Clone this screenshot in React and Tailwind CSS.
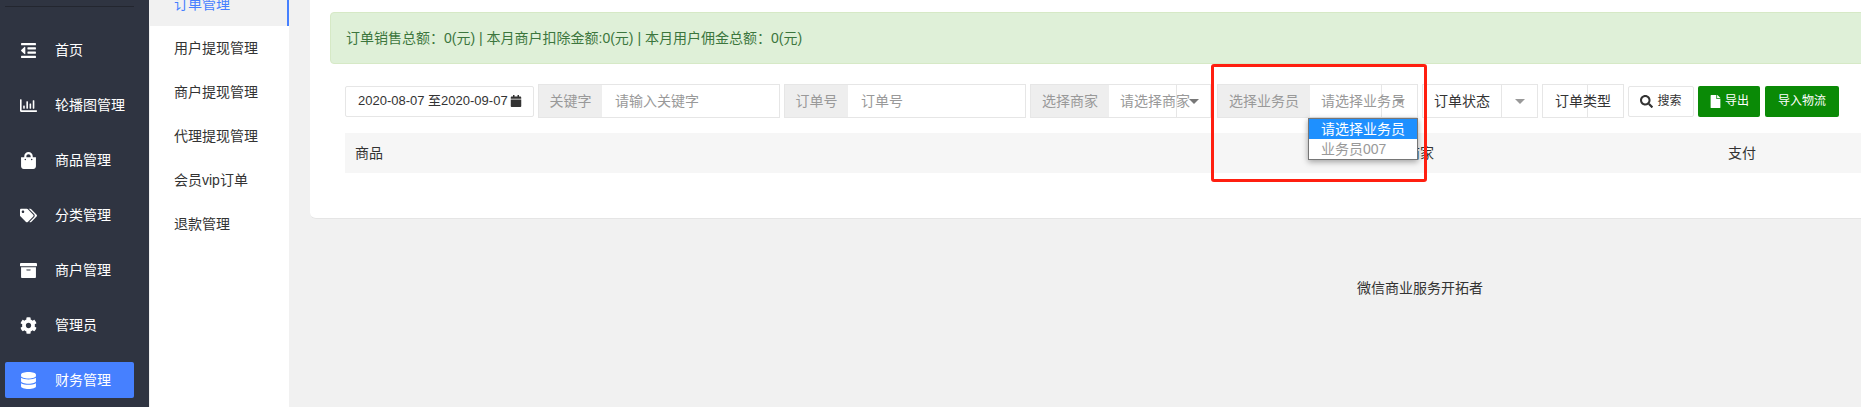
import {FaOutdent, FaRegChartBar, FaShoppingBag, FaTags, FaArchive, FaCog, FaDatabase, FaCalendar, FaSearch, FaFile} from "react-icons/fa";

const fontStack = "font-['Liberation_Sans','Noto_Sans_CJK_SC',sans-serif]";

const menu = [
  {name: '首页', icon: FaOutdent},
  {name: '轮播图管理', icon: FaRegChartBar},
  {name: '商品管理', icon: FaShoppingBag},
  {name: '分类管理', icon: FaTags},
  {name: '商户管理', icon: FaArchive},
  {name: '管理员', icon: FaCog},
  {name: '财务管理', icon: FaDatabase, active: true},
];

const subMenu = ['用户提现管理', '商户提现管理', '代理提现管理', '会员vip订单', '退款管理'];

function Sidebar() {
  return (
    <aside className="w-[149px] shrink-0 bg-[#2f3441] pl-[5px] pr-[15px] pt-[6px]">
      <div className="h-px bg-[#23262f]" />
      <ul className="mt-[25px] flex flex-col gap-[19px]">
        {menu.map(item => (
          <li
            key={item.name}
            className={`flex h-[36px] items-center rounded-[2px] pl-[15px] text-[14px] text-white ${item.active ? 'bg-[#4680ff]' : ''}`}
          >
            <span className="flex w-[35px] shrink-0 items-center">
              <item.icon className="text-[17px]" />
            </span>
            {item.name}
          </li>
        ))}
      </ul>
    </aside>
  );
}

function SubNav() {
  return (
    <nav className="ml-px w-[139px] shrink-0 bg-white text-[14px] text-[#333]">
      <div className="-mt-[18px] flex h-[44px] items-center border-r-2 border-[#4680ff] bg-[#f1f1f1] pl-[24px] text-[#4680ff]">
        订单管理
      </div>
      {subMenu.map(name => (
        <div key={name} className="flex h-[44px] items-center pl-[24px]">{name}</div>
      ))}
    </nav>
  );
}

function InputGroup({label, placeholder, width, labelWidth}) {
  return (
    <div className={`flex h-[34px] shrink-0 border border-[#e6e6e6] text-[14px] ${width}`}>
      <div className={`flex shrink-0 items-center justify-center bg-[#eeeeee] text-[#999] ${labelWidth}`}>{label}</div>
      <div className="flex items-center pl-[13px] text-[#999]">{placeholder}</div>
    </div>
  );
}

function Caret({className}) {
  return <span className={`block h-0 w-0 border-x-[5px] border-t-[5px] border-x-transparent ${className}`} />;
}

function SelectGroup({label, placeholder, width, labelWidth, selectWidth}) {
  return (
    <div className={`flex h-[34px] shrink-0 border border-[#e6e6e6] text-[14px] ${width}`}>
      <div className={`flex shrink-0 items-center justify-center bg-[#eeeeee] text-[#999] ${labelWidth}`}>{label}</div>
      <div className={`flex shrink-0 items-center whitespace-nowrap border-r border-[#e6e6e6] pl-[11px] text-[#999] ${selectWidth}`}>{placeholder}</div>
    </div>
  );
}

function Toolbar() {
  return (
    <div className="ml-[35px] mt-[20px] flex items-center gap-[4px] whitespace-nowrap">
      <div className="flex h-[31px] w-[189px] shrink-0 items-center gap-[2px] rounded-[2px] border border-[#e6e6e6] pl-[12px] text-[13px] text-[#333]">
        2020-08-07 至2020-09-07
        <FaCalendar className="text-[12px]" />
      </div>
      <InputGroup label="关键字" placeholder="请输入关键字" width="w-[242px]" labelWidth="w-[63px]" />
      <InputGroup label="订单号" placeholder="订单号" width="w-[242px]" labelWidth="w-[63px]" />
      <div className="relative">
        <SelectGroup label="选择商家" placeholder="请选择商家" width="w-[181px]" labelWidth="w-[78px]" selectWidth="w-[68px]" />
        <Caret className="absolute left-[159px] top-[15px] border-t-[#777]" />
      </div>
      <div className="relative ml-[2px]">
        <SelectGroup label="选择业务员" placeholder="请选择业务员" width="w-[201px]" labelWidth="w-[92px]" selectWidth="w-[72px]" />
        <Caret className="absolute left-[178px] top-[15px] border-t-[#999]" />
      </div>
      <div className="flex h-[34px] w-[116px] shrink-0 border border-[#e6e6e6] text-[14px] text-[#333]">
        <div className="flex w-[79px] shrink-0 items-center justify-center border-r border-[#e6e6e6]">订单状态</div>
        <div className="flex flex-1 items-center justify-center"><Caret className="border-t-[#999]" /></div>
      </div>
      <div className="flex h-[34px] w-[82px] shrink-0 border border-[#e6e6e6] text-[14px] text-[#333]">
        <div className="flex w-[45px] shrink-0 items-center whitespace-nowrap border-r border-[#e6e6e6] pl-[12px]">订单类型</div>
      </div>
      <button className="flex h-[31px] w-[66px] shrink-0 items-center justify-center gap-[4px] rounded-[2px] border border-[#e6e6e6] bg-white text-[12px] text-[#333]">
        <FaSearch className="text-[13px]" />
        搜索
      </button>
      <button className="flex h-[31px] w-[62px] shrink-0 items-center justify-center gap-[3px] rounded-[2px] bg-[#0a8a06] text-[12px] text-white">
        <FaFile className="text-[13px]" />
        导出
      </button>
      <button className="ml-px flex h-[31px] w-[74px] shrink-0 items-center justify-center rounded-[2px] bg-[#0a8a06] text-[12px] text-white">
        导入物流
      </button>
    </div>
  );
}

export default function App() {
  return (
    <div className={`flex h-screen overflow-hidden bg-[#f1f1f1] ${fontStack}`}>
      <Sidebar />
      <SubNav />
      <main className="min-w-0 flex-1 overflow-hidden pl-[21px]">
        <div className="w-[2220px]">
          <section className="relative h-[219px] rounded-bl-[6px] border-b border-[#e5e5e5] bg-white pt-[12px]">
            <div className="ml-[20px] flex h-[52px] items-center rounded-[4px] border border-[#d6e9c6] bg-[#dff0d8] pl-[15px] text-[14px] text-[#3c763d]">
              订单销售总额：0(元) | 本月商户扣除金额:0(元) | 本月用户佣金总额：0(元)
            </div>
            <Toolbar />
            <div className="ml-[35px] mt-[15px] flex h-[40px] items-center bg-[#f6f6f6] pl-[10px] text-[14px] text-[#333]">
              <div className="w-[1051px] shrink-0">商品</div>
              <div className="w-[322px] shrink-0">商家</div>
              <div>支付</div>
            </div>

            {/* opened select list */}
            <div className="absolute left-[998px] top-[118px] w-[110px] border border-[#767676] bg-white text-[14px] text-[#999] shadow-[0_2px_6px_rgba(0,0,0,0.35)]">
              <div className="flex h-[20px] items-center bg-[#1e90ff] pl-[12px] text-white">请选择业务员</div>
              <div className="flex h-[20px] items-center pl-[12px]">业务员007</div>
            </div>

            {/* red annotation box */}
            <div className="absolute left-[901px] top-[64px] h-[118px] w-[216px] rounded-[3px] border-[3px] border-[#ff1f10]" />
          </section>
          <footer className="mt-[59px] text-center text-[14px] leading-[20px] text-[#333]">微信商业服务开拓者</footer>
        </div>
      </main>
    </div>
  );
}
